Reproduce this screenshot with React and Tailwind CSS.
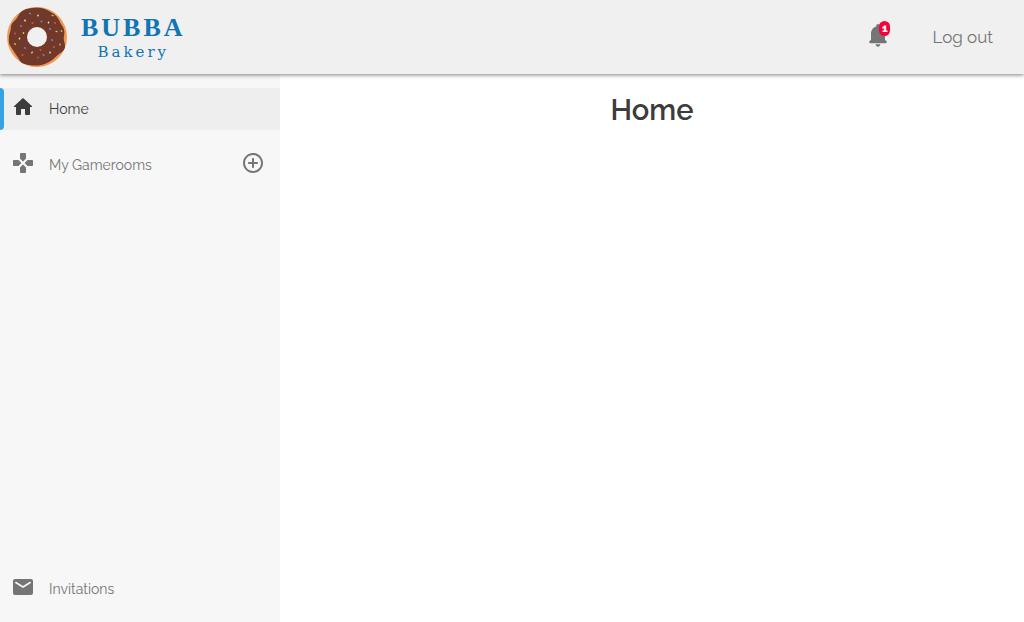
import React from "react";

const HOME = "M10 19v-5h4v5c0 .55.45 1 1 1h3c.55 0 1-.45 1-1v-7h1.7c.46 0 .68-.57.33-.87L12.67 3.6c-.38-.34-.96-.34-1.34 0l-8.36 7.53c-.34.3-.13.87.33.87H5v7c0 .55.45 1 1 1h3c.55 0 1-.45 1-1z";
const GAMEPAD = "M15 7.5V3c0-.55-.45-1-1-1h-4c-.55 0-1 .45-1 1v4.5l2.65 2.65c.2.2.51.2.71 0L15 7.5zM7.5 9H3c-.55 0-1 .45-1 1v4c0 .55.45 1 1 1h4.5l2.65-2.65c.2-.2.2-.51 0-.71L7.5 9zM9 16.5V21c0 .55.45 1 1 1h4c.55 0 1-.45 1-1v-4.5l-2.65-2.65c-.2-.2-.51-.2-.71 0L9 16.5zm7.5-7.5l-2.65 2.65c-.2.2-.2.51 0 .71L16.5 15H21c.55 0 1-.45 1-1v-4c0-.55-.45-1-1-1h-4.5z";
const MAIL = "M20 4H4c-1.1 0-2 .9-2 2v12c0 1.1.9 2 2 2h16c1.1 0 2-.9 2-2V6c0-1.1-.9-2-2-2zm-.4 4.25l-7.07 4.42c-.32.2-.74.2-1.06 0L4.4 8.25c-.25-.16-.4-.43-.4-.72 0-.67.73-1.07 1.3-.72L12 11l6.7-4.19c.57-.35 1.3.05 1.3.72 0 .29-.15.56-.4.72z";
const ADD = "M12 7c-.55 0-1 .45-1 1v3H8c-.55 0-1 .45-1 1s.45 1 1 1h3v3c0 .55.45 1 1 1s1-.45 1-1v-3h3c.55 0 1-.45 1-1s-.45-1-1-1h-3V8c0-.55-.45-1-1-1zm0-5C6.48 2 2 6.48 2 12s4.48 10 10 10 10-4.48 10-10S17.52 2 12 2zm0 18c-4.41 0-8-3.59-8-8s3.59-8 8-8 8 3.59 8 8-3.59 8-8 8z";
const BELL = "M12 22c1.1 0 2-.9 2-2h-4c0 1.1.89 2 2 2zm6-6v-5c0-3.07-1.64-5.64-4.5-6.32V4c0-.83-.67-1.5-1.5-1.5s-1.5.67-1.5 1.5v.68C7.63 5.36 6 7.92 6 11v5l-1.29 1.29c-.63.63-.19 1.71.7 1.71h13.17c.89 0 1.34-1.08.71-1.71L18 16z";

// x, y, rotation, color
const sprinkles = [
    [30, 13.5, 40, "#7d8be0"], [38, 15.5, 80, "#f0e4dc"], [52.5, 15.5, 20, "#e0c250"], [25, 20.5, 60, "#f0e4dc"],
    [32.5, 23, 0, "#e0584e"], [41.5, 21.5, 40, "#7d8be0"], [48.5, 22.5, 100, "#f0e4dc"], [55, 23, 30, "#e0584e"],
    [21, 26, 40, "#7d8be0"], [50, 29, 45, "#7d8be0"], [56.5, 31.5, 20, "#e0c250"], [61.5, 31, 80, "#e0c250"],
    [15, 33.5, 60, "#e0584e"], [23.5, 33, 120, "#e0c250"], [19.5, 38.5, 100, "#f0e4dc"], [52, 40, 45, "#7d8be0"],
    [15, 44, 45, "#e0c250"], [25, 48, 20, "#7d8be0"], [54, 47, 120, "#e0584e"], [60, 44.5, 70, "#e0c250"],
    [32, 52.5, 110, "#f0e4dc"], [40.5, 50, 60, "#e0584e"], [50, 52.5, 100, "#f0e4dc"], [22.5, 55, 0, "#e0584e"],
    [43.5, 55, 30, "#7d8be0"], [38, 57.5, 100, "#e0584e"],
];

const Icon = ({ path, className = "size-6" }) => (
    <svg viewBox="0 0 24 24" fill="currentColor" aria-hidden="true" className={`shrink-0 ${className}`}>
        <path d={path} />
    </svg>
);

const Donut = () => (
    <svg viewBox="7 7 60 60" aria-hidden="true" className="size-[60px] shrink-0">
        <circle cx="37" cy="37" r="30" fill="#f09a55" />
        <path
            d="M21 12C24 9 28 8.5 32 8C37 7.5 41 7.5 45 9C49 11 51 12 54 14C58 17 59 20 61 24C64 28 65 31 64 36C63 40 65 42 65 46C65 50 62 52 59 54C55 57 52 61 47 63C41 66 35 66 29 65C25 64 22 64 20 61C18 57 14 52 11 47C8 43 9 40 9 36C10 32 11 30 11 26C12 22 15 21 17 18C18 16 19 14 21 12Z"
            fill="#70392a"
        />
        {sprinkles.map(([x, y, angle, color], index) => (
            <rect
                key={index}
                x={x - 1.1}
                y={y - 0.7}
                width="2.2"
                height="1.4"
                rx="0.7"
                fill={color}
                transform={`rotate(${angle} ${x} ${y})`}
            />
        ))}
        <circle cx="37" cy="37" r="10" fill="#f0f0f0" />
    </svg>
);

const Header = () => (
    <header className="relative z-10 flex h-[74px] items-center justify-between bg-[#f0f0f0] pl-[7px] pr-[31px] shadow-[0_1px_4px_rgba(0,0,0,0.5)]">
        <a href="#home" className="flex items-center gap-3.5 text-[#0f75b5]">
            <Donut />
            <span className="flex flex-col items-center pt-0.5">
                <span className="font-['Liberation_Serif',serif] text-[26px] leading-7 font-bold tracking-[3px]">BUBBA</span>
                <span className="font-['DejaVu_Serif',serif] text-[15px] leading-5 tracking-[3px]">Bakery</span>
            </span>
        </a>
        <div className="flex items-center gap-10 text-[#757575]">
            <button type="button" aria-label="Notifications" className="relative cursor-pointer pb-1">
                <Icon path={BELL} className="size-7" />
                <span className="absolute top-0 right-0.5 flex h-[15px] w-[11px] items-center justify-center rounded-md bg-[#f70138] text-[11px] leading-none font-extrabold text-white">
                    1
                </span>
            </button>
            <button type="button" className="cursor-pointer pt-0.5 text-[17px]">Log out</button>
        </div>
    </header>
);

const NavItem = ({ path, label, active, children }) => (
    <li
        className={`relative flex h-[42px] items-center pr-[15px] pl-[11px] ${
            active ? "bg-[#eeeeee] text-[#3c3c3c]" : "text-[#757575]"
        }`}
    >
        {active && <span className="absolute inset-y-0 left-0 w-1 rounded-r-sm bg-[#36a2e2]" />}
        <a href="#nav" className="flex flex-1 items-center gap-3.5">
            <span className="pb-1"><Icon path={path} /></span>
            <span className="text-[14px]">{label}</span>
        </a>
        {children}
    </li>
);

const App = () => {
    return (
        <div className="flex min-h-screen flex-col bg-white font-[Raleway,Lato,sans-serif]">
            <Header />
            <div className="flex flex-1">
                <nav className="flex w-[280px] shrink-0 flex-col justify-between bg-[#f7f7f7] pt-3.5 pb-3">
                    <ul className="flex flex-col gap-3.5">
                        <NavItem path={HOME} label="Home" active />
                        <NavItem path={GAMEPAD} label="My Gamerooms">
                            <button type="button" aria-label="Add gameroom" className="cursor-pointer pb-1">
                                <Icon path={ADD} />
                            </button>
                        </NavItem>
                    </ul>
                    <ul>
                        <NavItem path={MAIL} label="Invitations" />
                    </ul>
                </nav>
                <main className="flex-1 pt-4">
                    <h1 className="text-center text-[29px] leading-10 font-semibold text-[#3c3c3c]">Home</h1>
                </main>
            </div>
        </div>
    );
};

export default App;
